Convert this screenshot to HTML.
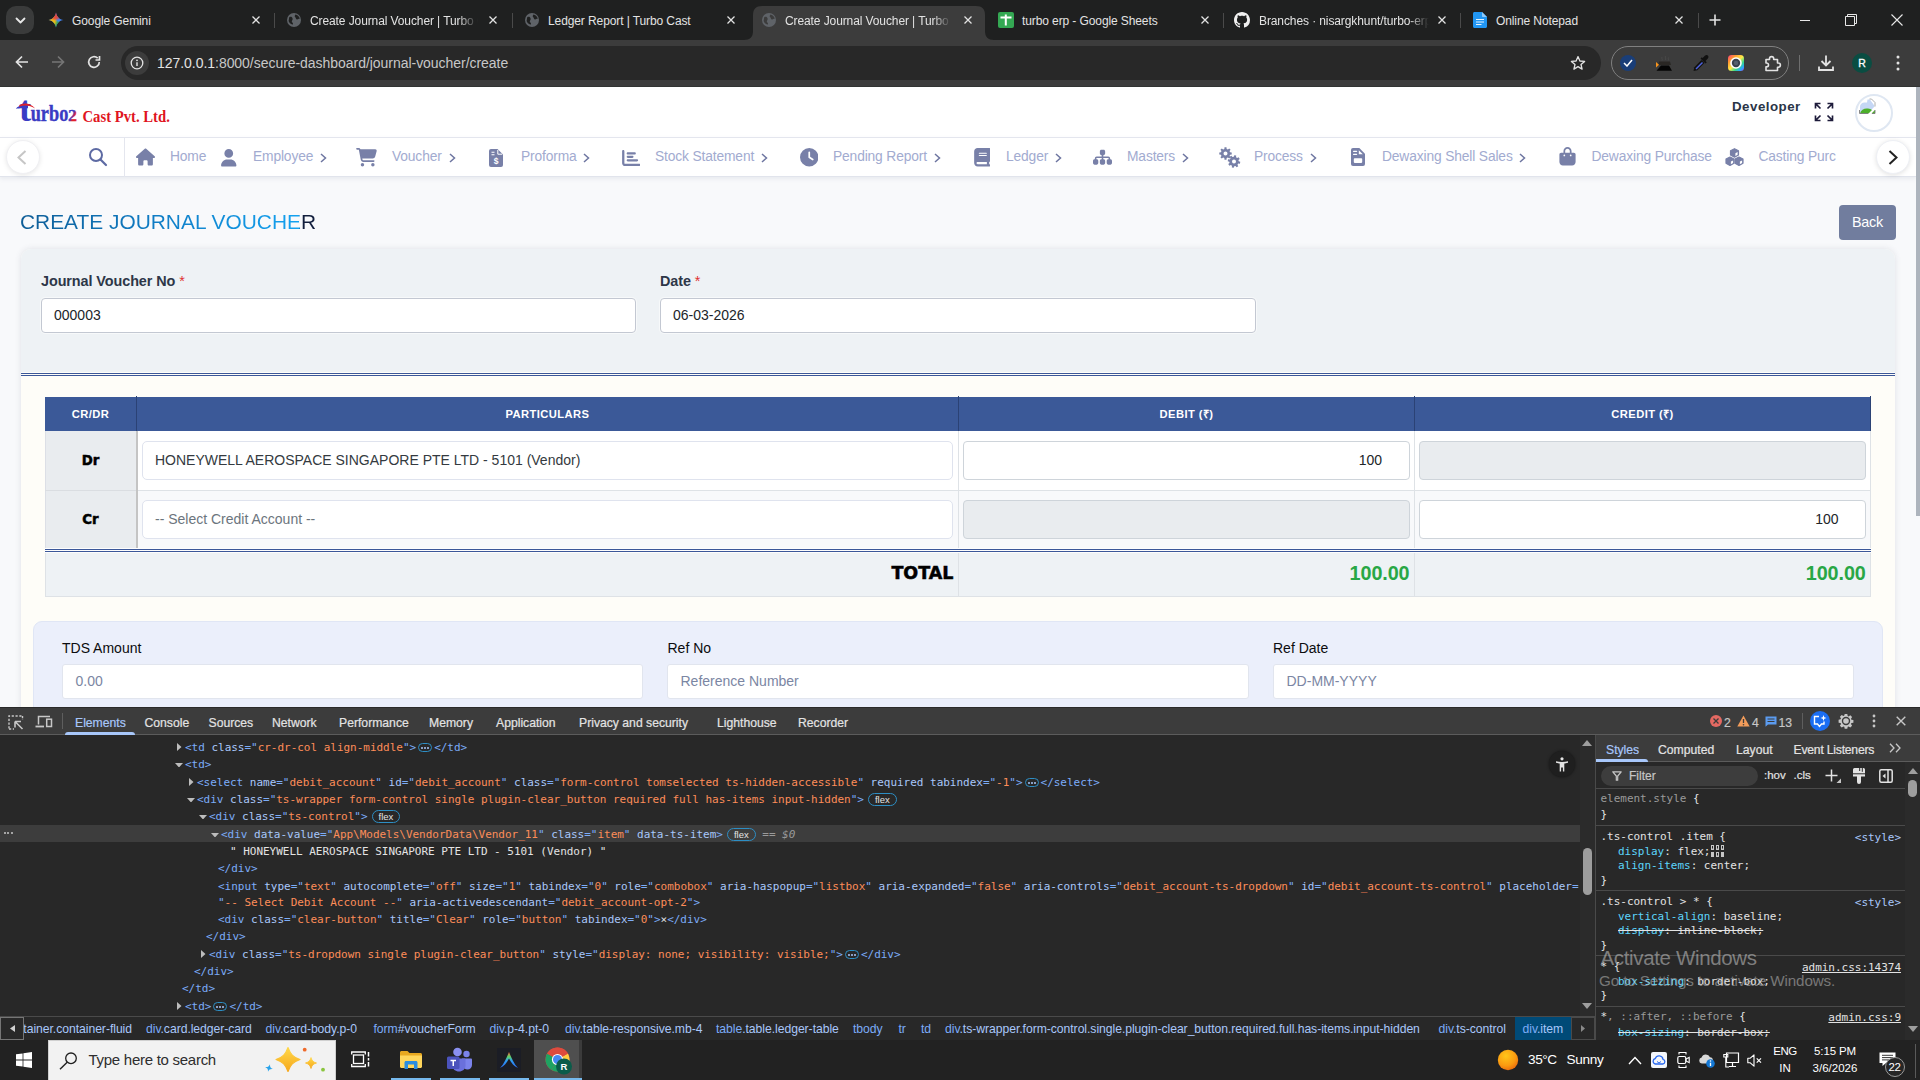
<!DOCTYPE html>
<html lang="en">
<head>
<meta charset="utf-8">
<title>Create Journal Voucher | Turbo Cast</title>
<style>
*{box-sizing:border-box;margin:0;padding:0}
html,body{width:1920px;height:1080px;overflow:hidden;background:#f4f6f9;font-family:"Liberation Sans",sans-serif;}
body{position:relative}
.abs{position:absolute}
.ui{font-family:"Liberation Sans",sans-serif;}
svg{display:block}
/* ===== Chrome ===== */
#tabstrip{position:absolute;left:0;top:0;width:1920px;height:40px;background:#1f2020}
#toolbar{position:absolute;left:0;top:40px;width:1920px;height:46px;background:#3c3c3c}
#topline{position:absolute;left:0;top:86px;width:1920px;height:1px;background:#323433}
.tab{position:absolute;top:7px;height:33px;color:#e3e3e3;font-size:12px;line-height:28px;white-space:nowrap}
.tab .t{position:absolute;top:0;left:0;letter-spacing:-0.1px}
.tabx{position:absolute}
.tsep{position:absolute;top:13px;width:1px;height:15px;background:#4a4a4a}
#omni{position:absolute;left:121px;top:46px;width:1480px;height:34px;border-radius:17px;background:#282828}
#url{position:absolute;left:157px;top:54px;font-size:14px;color:#e3e3e3;line-height:18px;letter-spacing:-0.04px}
/* ===== Page ===== */
#page{position:absolute;left:0;top:87px;width:1920px;height:620px;background:#f8f9fb;overflow:hidden}
#hdr{position:absolute;left:0;top:0;width:1916px;height:50px;background:#fff}
#nav{position:absolute;left:0;top:50px;width:1916px;height:40px;background:#fff;border-top:1px solid #e4e6ee;border-bottom:1px solid #e1e4ec;box-shadow:0 2px 4px rgba(120,130,160,.12)}
.nv{position:absolute;top:-.5px;height:37px;line-height:37px;font-size:13.800px;color:#a2abd0;letter-spacing:-.14px;white-space:nowrap}
.ni{position:absolute}

.lbl{font-size:14.400px;font-weight:bold;color:#2d3748;line-height:18px;letter-spacing:-.08px;white-space:nowrap}
.inp{height:35px;border:1px solid #c3c8d2;border-radius:4px;background:#fff;font-size:14px;line-height:33px;padding-left:12px;color:#212529;box-shadow:0 0 0 1px rgba(255,255,255,.5)}
.th{top:310px;height:34px;line-height:34px;text-align:center;color:#fff;font-weight:bold;font-size:11.200px;letter-spacing:.42px;white-space:nowrap}
.blk{font-family:"DejaVu Sans","Liberation Sans",sans-serif;font-weight:bold;color:#000;-webkit-text-stroke:.5px #000}
.sel{height:39px;border:1px solid #dfe3ee;border-radius:5px;background:#fff;font-size:14px;line-height:37px;padding-left:12px;white-space:nowrap}
.num{height:38.500px;border:1px solid #ced4da;border-radius:4px;background:#fff;font-size:14px;line-height:37px;padding-right:26.500px;text-align:right;color:#212529}
.num.dis{background:#e9ecef}
.tot{top:473px;text-align:right;font-size:19.800px;font-weight:bold;color:#28a745;line-height:26px;letter-spacing:-.1px}
.lb2{top:552px;font-size:14px;color:#0c0c0e;line-height:18px;white-space:nowrap}
.in2{top:577px;height:35px;border:1px solid #e1e5ee;border-radius:3px;background:#fff;font-size:14px;line-height:33px;padding-left:12.500px;color:#7b86a3;white-space:nowrap}
/* ===== DevTools ===== */
#dt{position:absolute;left:0;top:707px;width:1920px;height:333px;background:#282828}
.dtt{position:absolute;top:7.500px;font-size:12.200px;line-height:16px;color:#e3e3e3;white-space:nowrap;-webkit-text-stroke:.2px currentColor}
.ln{position:absolute;font-family:"DejaVu Sans Mono","Liberation Mono",monospace;font-size:11px;line-height:17px;white-space:pre;letter-spacing:-.02px;color:#e3e3e3}
.ln .t{color:#7cacf8}.ln .n{color:#a8c7fa}.ln .v{color:#fe8d59}.ln .w{color:#e3e3e3}
.tri{position:absolute}
.dots{display:inline-block;vertical-align:middle;position:relative;width:14px;height:9px;border:1px solid #2d8ec4;border-radius:5px;margin:0 2px 1px 2px}
.dots i{position:absolute;top:2.500px;width:2px;height:2px;border-radius:1px;background:#a8c7fa}
.dots i:nth-child(1){left:2px}.dots i:nth-child(2){left:5px}.dots i:nth-child(3){left:8px}
.flex{display:inline-block;vertical-align:middle;font-family:"Liberation Sans",sans-serif;font-size:9.500px;line-height:11px;height:13px;padding:0 6px;border:1px solid #2d8ec4;border-radius:7px;color:#e3e3e3;margin:0 0 1px 4px;letter-spacing:0}
.eq{color:#9a9a9a;font-style:italic}
.d3{position:absolute;top:0;width:2px;height:2px;border-radius:1px;background:#c7c7c7}
.sl{position:absolute;left:1600.500px;font-family:"DejaVu Sans Mono","Liberation Mono",monospace;font-size:11px;line-height:15px;white-space:pre;letter-spacing:-.02px;color:#e3e3e3}
.sl .g{color:#9a9a9a}.sl .p{color:#5cd5fb}
.sr{position:absolute;right:19px;font-family:"DejaVu Sans Mono","Liberation Mono",monospace;font-size:11px;line-height:15px;white-space:pre;letter-spacing:-.02px;color:#e3e3e3}
.sr .lk{color:#a8c7fa}.sr .ul{text-decoration:underline}
.sep{position:absolute;left:1596px;width:309px;height:1px;background:#4a4a4a}
.cr{position:absolute;top:314px;font-size:12.200px;line-height:16px;color:#a8c7fa;white-space:nowrap;letter-spacing:-.05px}
.cr b{font-weight:normal;color:#7cacf8}
/* ===== Taskbar ===== */
#tb{position:absolute;left:0;top:1040px;width:1920px;height:40px;background:#222}
.tbt{color:#fff;white-space:nowrap}
</style>
</head>
<body>
<!--CHROME-->
<div id="tabstrip">
  <!-- tab search -->
  <div class="abs" style="left:6px;top:6px;width:28px;height:28px;border-radius:10px;background:#3a3b3b"></div>
  <svg class="abs" style="left:14.500px;top:16.500px" width="11" height="8" viewBox="0 0 11 8"><path d="M1.5 1.5 L5.5 5.5 L9.5 1.5" fill="none" stroke="#e8e8e8" stroke-width="1.8" stroke-linecap="round" stroke-linejoin="round"/></svg>
  <!-- active tab shape -->
  <svg class="abs" style="left:744px;top:6px" width="250" height="34" viewBox="0 0 250 34"><path d="M0 34 C6 34 9 31 9 25 L9 9 C9 3 12 0 18 0 L232 0 C238 0 241 3 241 9 L241 25 C241 31 244 34 250 34 Z" fill="#3c3c3c"/></svg>
  <!-- tab 1 -->
  <svg class="abs" style="left:48px;top:12px" width="16" height="16" viewBox="0 0 16 16"><defs><radialGradient id="gmy" cx="0" cy=".55" r=".6"><stop offset="0" stop-color="#fbbc04"/><stop offset=".7" stop-color="#fbbc04" stop-opacity=".9"/><stop offset="1" stop-color="#fbbc04" stop-opacity="0"/></radialGradient><radialGradient id="gmr" cx=".45" cy="0" r=".55"><stop offset="0" stop-color="#ea4335"/><stop offset=".7" stop-color="#ea4335" stop-opacity=".9"/><stop offset="1" stop-color="#ea4335" stop-opacity="0"/></radialGradient><radialGradient id="gmg" cx=".5" cy="1" r=".5"><stop offset="0" stop-color="#34a853"/><stop offset=".7" stop-color="#34a853" stop-opacity=".9"/><stop offset="1" stop-color="#34a853" stop-opacity="0"/></radialGradient></defs><path id="gmp" d="M8 0.500 C8.600 4.600 11.400 7.400 15.500 8 C11.400 8.600 8.600 11.400 8 15.500 C7.400 11.400 4.600 8.600 0.500 8 C4.600 7.400 7.400 4.600 8 0.500Z" fill="#4285f4"/><path d="M8 0.500 C8.600 4.600 11.400 7.400 15.500 8 C11.400 8.600 8.600 11.400 8 15.500 C7.400 11.400 4.600 8.600 0.500 8 C4.600 7.400 7.400 4.600 8 0.500Z" fill="url(#gmg)"/><path d="M8 0.500 C8.600 4.600 11.400 7.400 15.500 8 C11.400 8.600 8.600 11.400 8 15.500 C7.400 11.400 4.600 8.600 0.500 8 C4.600 7.400 7.400 4.600 8 0.500Z" fill="url(#gmy)"/><path d="M8 0.500 C8.600 4.600 11.400 7.400 15.500 8 C11.400 8.600 8.600 11.400 8 15.500 C7.400 11.400 4.600 8.600 0.500 8 C4.600 7.400 7.400 4.600 8 0.500Z" fill="url(#gmr)"/></svg>
  <div class="tab" style="left:72px"><span class="t">Google Gemini</span></div>
  <svg class="tabx" style="left:252px;top:16px" width="8" height="8" viewBox="0 0 8 8"><path d="M.5 .5L7.500 7.500M7.500 .5L.5 7.500" stroke="#e3e3e3" stroke-width="1.250"/></svg>
  <div class="tsep" style="left:274px"></div>
  <!-- tab 2 -->
  <svg class="abs globe" style="left:286px;top:12px" width="16" height="16" viewBox="0 0 16 16"><circle cx="8" cy="8" r="7" fill="#5f6368"/><path d="M3.2 5.2 C5 4.2 6.2 5 6.6 6.4 C7 7.8 5.6 8.4 5.8 9.6 C6 10.8 7.4 11 7 12.6 C5 12.4 3.4 11 2.6 9 Z M9.4 2.4 C11.6 2.8 13.4 4.600 13.800 6.800 C12.400 6.600 12 7.800 10.800 7.400 C9.600 7 10.200 5.800 9.200 5.200 C8.400 4.600 8.800 3.200 9.400 2.400Z" fill="#1f2020"/></svg>
  <div class="tab" style="left:310px;width:170px;overflow:hidden;-webkit-mask-image:linear-gradient(90deg,#000 148px,transparent 168px)"><span class="t">Create Journal Voucher | Turbo Cast</span></div>
  <svg class="tabx" style="left:489px;top:16px" width="8" height="8" viewBox="0 0 8 8"><path d="M.5 .5L7.500 7.500M7.500 .5L.5 7.500" stroke="#e3e3e3" stroke-width="1.250"/></svg>
  <div class="tsep" style="left:512px"></div>
  <!-- tab 3 -->
  <svg class="abs globe" style="left:524px;top:12px" width="16" height="16" viewBox="0 0 16 16"><circle cx="8" cy="8" r="7" fill="#5f6368"/><path d="M3.2 5.2 C5 4.2 6.2 5 6.6 6.4 C7 7.8 5.6 8.4 5.8 9.6 C6 10.8 7.4 11 7 12.6 C5 12.4 3.4 11 2.6 9 Z M9.4 2.4 C11.6 2.8 13.4 4.600 13.800 6.800 C12.400 6.600 12 7.800 10.800 7.400 C9.600 7 10.200 5.800 9.200 5.200 C8.400 4.600 8.800 3.200 9.400 2.400Z" fill="#1f2020"/></svg>
  <div class="tab" style="left:548px"><span class="t">Ledger Report | Turbo Cast</span></div>
  <svg class="tabx" style="left:727px;top:16px" width="8" height="8" viewBox="0 0 8 8"><path d="M.5 .5L7.500 7.500M7.500 .5L.5 7.500" stroke="#e3e3e3" stroke-width="1.250"/></svg>
  <!-- tab 4 active -->
  <svg class="abs globe" style="left:761px;top:12px" width="16" height="16" viewBox="0 0 16 16"><circle cx="8" cy="8" r="7" fill="#5f6368"/><path d="M3.2 5.2 C5 4.2 6.2 5 6.6 6.4 C7 7.8 5.6 8.4 5.8 9.6 C6 10.8 7.4 11 7 12.6 C5 12.4 3.4 11 2.6 9 Z M9.4 2.4 C11.6 2.8 13.4 4.600 13.800 6.800 C12.400 6.600 12 7.800 10.800 7.400 C9.600 7 10.200 5.800 9.200 5.200 C8.400 4.600 8.800 3.200 9.400 2.400Z" fill="#3c3c3c"/></svg>
  <div class="tab" style="left:785px;width:170px;overflow:hidden;-webkit-mask-image:linear-gradient(90deg,#000 148px,transparent 166px)"><span class="t">Create Journal Voucher | Turbo Cast</span></div>
  <svg class="tabx" style="left:964px;top:16px" width="8" height="8" viewBox="0 0 8 8"><path d="M.5 .5L7.500 7.500M7.500 .5L.5 7.500" stroke="#e3e3e3" stroke-width="1.250"/></svg>
  <!-- tab 5 sheets -->
  <svg class="abs" style="left:998px;top:12px" width="16" height="16" viewBox="0 0 16 16"><rect x="0" y="0" width="16" height="16" rx="2" fill="#34a853"/><path d="M2.500 5.500 H13.500 M7.800 2.500 V13.500" stroke="#fff" stroke-width="2"/></svg>
  <div class="tab" style="left:1022px"><span class="t">turbo erp - Google Sheets</span></div>
  <svg class="tabx" style="left:1201px;top:16px" width="8" height="8" viewBox="0 0 8 8"><path d="M.5 .5L7.500 7.500M7.500 .5L.5 7.500" stroke="#e3e3e3" stroke-width="1.250"/></svg>
  <div class="tsep" style="left:1223px"></div>
  <!-- tab 6 github -->
  <svg class="abs" style="left:1234px;top:12px" width="16" height="16" viewBox="0 0 16 16"><path fill="#f0f0f0" d="M8 0C3.580 0 0 3.580 0 8c0 3.540 2.290 6.530 5.470 7.590.400.070.550-.170.550-.380 0-.190-.010-.820-.010-1.490-2.010.370-2.530-.490-2.690-.940-.090-.230-.480-.940-.820-1.130-.280-.150-.680-.520-.010-.530.630-.010 1.080.580 1.230.820.720 1.210 1.870.870 2.330.660.070-.520.280-.870.510-1.070-1.780-.200-3.640-.890-3.640-3.950 0-.870.310-1.590.820-2.150-.080-.200-.360-1.020.080-2.120 0 0 .670-.210 2.200.820.640-.180 1.320-.270 2-.270s1.360.090 2 .270c1.530-1.040 2.200-.820 2.200-.820.440 1.100.160 1.920.080 2.120.510.560.820 1.270.820 2.150 0 3.070-1.870 3.750-3.650 3.950.290.250.540.730.540 1.480 0 1.070-.010 1.930-.010 2.200 0 .210.150.460.550.380A8.013 8.013 0 0 0 16 8c0-4.420-3.580-8-8-8z"/></svg>
  <div class="tab" style="left:1259px;width:172px;overflow:hidden;-webkit-mask-image:linear-gradient(90deg,#000 150px,transparent 170px)"><span class="t">Branches · nisargkhunt/turbo-erp</span></div>
  <svg class="tabx" style="left:1438px;top:16px" width="8" height="8" viewBox="0 0 8 8"><path d="M.5 .5L7.500 7.500M7.500 .5L.5 7.500" stroke="#e3e3e3" stroke-width="1.250"/></svg>
  <div class="tsep" style="left:1460px"></div>
  <!-- tab 7 notepad -->
  <svg class="abs" style="left:1473px;top:12px" width="14" height="16" viewBox="0 0 14 16"><path d="M0 1.500 C0 .7 .7 0 1.500 0 H9 L14 5 V14.500 C14 15.300 13.300 16 12.500 16 H1.500 C.7 16 0 15.300 0 14.500Z" fill="#2196f3"/><path d="M9 0 L14 5 H10 C9.400 5 9 4.600 9 4Z" fill="#90caf9"/><path d="M3 7.500 H11 M3 10 H11 M3 12.500 H8.500" stroke="#e3f2fd" stroke-width="1.200"/></svg>
  <div class="tab" style="left:1496px"><span class="t">Online Notepad</span></div>
  <svg class="tabx" style="left:1675px;top:16px" width="8" height="8" viewBox="0 0 8 8"><path d="M.5 .5L7.500 7.500M7.500 .5L.5 7.500" stroke="#e3e3e3" stroke-width="1.250"/></svg>
  <div class="tsep" style="left:1698px"></div>
  <!-- new tab -->
  <svg class="abs" style="left:1709px;top:14px" width="12" height="12" viewBox="0 0 12 12"><path d="M6 0.500V11.500M0.500 6H11.500" stroke="#e3e3e3" stroke-width="1.600"/></svg>
  <!-- window controls -->
  <div class="abs" style="left:1800px;top:20px;width:10px;height:1px;background:#e8e8e8"></div>
  <svg class="abs" style="left:1845px;top:14px" width="12" height="12" viewBox="0 0 12 12"><path d="M0.500 2.500 H9.500 V11.500 H0.500Z M2.500 2.500 V0.500 H11.500 V9.500 H9.500" fill="none" stroke="#e8e8e8" stroke-width="1"/></svg>
  <svg class="abs" style="left:1891px;top:14px" width="12" height="12" viewBox="0 0 12 12"><path d="M0.500 0.500L11.500 11.500M11.500 0.500L0.500 11.500" stroke="#e8e8e8" stroke-width="1.100"/></svg>
</div>
<div id="toolbar">
  <!-- back -->
  <svg class="abs" style="left:15px;top:15px" width="14" height="14" viewBox="0 0 14 14"><path d="M13 7H2M7 1.500L1.500 7L7 12.500" fill="none" stroke="#e3e3e3" stroke-width="1.700"/></svg>
  <svg class="abs" style="left:51px;top:15px" width="14" height="14" viewBox="0 0 14 14"><path d="M1 7H12M7 1.500L12.500 7L7 12.500" fill="none" stroke="#757575" stroke-width="1.700"/></svg>
  <svg class="abs" style="left:87px;top:15px" width="14" height="14" viewBox="0 0 14 14"><path d="M12.300 7 A5.300 5.300 0 1 1 10.700 3.200" fill="none" stroke="#e3e3e3" stroke-width="1.700"/><path d="M12.500 1 V5 H8.500" fill="none" stroke="#e3e3e3" stroke-width="1.700"/></svg>
</div>
<div id="omni"></div>
<div class="abs" style="left:125px;top:51px;width:24px;height:24px;border-radius:12px;background:#3c3c3c"></div>
<svg class="abs" style="left:130px;top:56px" width="14" height="14" viewBox="0 0 14 14"><circle cx="7" cy="7" r="5.800" fill="none" stroke="#e3e3e3" stroke-width="1.300"/><path d="M7 6.300V10" stroke="#e3e3e3" stroke-width="1.400"/><circle cx="7" cy="4.300" r=".9" fill="#e3e3e3"/></svg>
<div id="url">127.0.0.1<span style="color:#c7c7c7">:8000/secure-dashboard/journal-voucher/create</span></div>
<!-- star -->
<svg class="abs" style="left:1570px;top:55px" width="16" height="16" viewBox="0 0 16 16"><path d="M8 1.600 L9.900 6 L14.600 6.400 L11 9.500 L12.100 14.100 L8 11.600 L3.900 14.100 L5 9.500 L1.400 6.400 L6.100 6Z" fill="none" stroke="#e3e3e3" stroke-width="1.300" stroke-linejoin="round"/></svg>
<!-- extensions pill -->
<div class="abs" style="left:1611px;top:46px;width:178px;height:34px;border-radius:17px;border:1px solid #808080"></div>
<div class="abs" style="left:1620px;top:55px;width:16px;height:16px;border-radius:8px;background:#1a3e78"></div>
<svg class="abs" style="left:1623px;top:59px" width="10" height="8" viewBox="0 0 10 8"><path d="M1 4L4 7L9 1" fill="none" stroke="#fff" stroke-width="1.500"/></svg>
<svg class="abs" style="left:1655px;top:54px" width="18" height="18" viewBox="0 0 18 18"><path d="M7 3C6 4.500 8 5 7 6.500M10.500 2C9.500 3.500 11.500 4.500 10.500 6M13.500 3.500C12.800 4.500 14 5.500 13.300 6.500" fill="none" stroke="#4a4a4a" stroke-width=".9"/><path d="M4 7.500H15L16 11H3Z" fill="#2a2724"/><path d="M1.500 16.800L6 11.500H14L17 16.800Z" fill="#050505"/><path d="M1 8V13.500L4 10.700Z" fill="#f7941d"/></svg>
<svg class="abs" style="left:1692px;top:54px" width="18" height="18" viewBox="0 0 18 18"><path d="M1.500 17L2.300 13.200L9.500 6L12.500 9L5.300 16.200Z" fill="#111"/><path d="M3.500 14.500L10 8L11 9L4.500 15.500Z" fill="#4f63e0"/><path d="M8.500 4.500L13.500 9.500L14.800 8.200L13.500 6.900L15.800 4.600C16.700 3.700 16.700 2.400 15.900 1.600C15.100 .8 13.800 .8 12.900 1.700L10.600 4L9.800 3.200Z" fill="#111"/></svg>
<svg class="abs" style="left:1728px;top:55px" width="16" height="16" viewBox="0 0 16 16"><defs><linearGradient id="rb" x1="0" y1="0" x2="1" y2="1"><stop offset="0" stop-color="#ff3b7f"/><stop offset=".25" stop-color="#ff9a2e"/><stop offset=".5" stop-color="#ffe94a"/><stop offset=".7" stop-color="#36d88a"/><stop offset=".85" stop-color="#2aa8ff"/><stop offset="1" stop-color="#a44cf6"/></linearGradient></defs><rect x="0" y="0" width="16" height="16" rx="3.500" fill="url(#rb)"/><circle cx="8" cy="8" r="5.800" fill="#fff"/><circle cx="8" cy="8" r="4.200" fill="#39424e"/><circle cx="8" cy="8" r="2.200" fill="#55606e"/></svg>
<svg class="abs" style="left:1763px;top:53px" width="20" height="20" viewBox="0 0 20 20"><path d="M3 6.500H6.500V5.700A2.100 2.100 0 0 1 10.700 5.700V6.500H14.500V10H15.300A2.100 2.100 0 0 1 15.300 14.200H14.500V17.500H3V13.800H3.600A1.900 1.900 0 0 0 3.600 10H3Z" fill="none" stroke="#e3e3e3" stroke-width="1.600" stroke-linejoin="round"/></svg>
<div class="abs" style="left:1798.500px;top:55px;width:1px;height:16px;background:#6e6e6e"></div>
<!-- download -->
<svg class="abs" style="left:1817px;top:54px" width="18" height="18" viewBox="0 0 18 18"><path d="M9 1.500V11M4.500 7L9 11.500L13.500 7M2 12.500V16H16V12.500" fill="none" stroke="#e3e3e3" stroke-width="1.800"/></svg>
<div class="abs" style="left:1852px;top:53px;width:20px;height:20px;border-radius:10px;background:#0a4d42;color:#fff;font-size:10.500px;text-align:center;line-height:20px;-webkit-text-stroke:.3px #fff">R</div>
<svg class="abs" style="left:1896px;top:55px" width="4" height="16" viewBox="0 0 4 16"><circle cx="2" cy="2" r="1.500" fill="#e3e3e3"/><circle cx="2" cy="8" r="1.500" fill="#e3e3e3"/><circle cx="2" cy="14" r="1.500" fill="#e3e3e3"/></svg>
<div id="topline"></div>
<!--PAGE-->
<div id="page">
<div id="hdr">
  <!-- logo -->
  <svg class="abs" style="left:0;top:0" width="190" height="50" viewBox="0 0 190 50">
    <defs><linearGradient id="lg2" x1="0" y1="0" x2="1" y2="1"><stop offset="0" stop-color="#3a3cc4"/><stop offset=".45" stop-color="#3a3cc4"/><stop offset=".6" stop-color="#e0202a"/><stop offset="1" stop-color="#e0202a"/></linearGradient></defs>
    <text x="19" y="34.300" font-family="Liberation Serif,serif" font-weight="bold" font-size="36.500" fill="#3a3cc4">t</text>
    <path d="M15.800 21.800 C17.500 19.500 20 18.300 23 18.300 L28 18.300 L28 21.300 L23 21.300 C20 21.300 17.500 21.500 15.800 21.800Z" fill="#3a3cc4"/>
    <path d="M19 18.800 C23 15.300 30 15.300 35.200 21.500 C30 18.200 24 17.800 19 19.800Z" fill="#e0202a"/>
    <g transform="translate(30.700,34.300) scale(.85,1.030)"><text x="0" y="0" font-family="Liberation Serif,serif" font-weight="bold" font-size="21.500" fill="#3a3cc4" stroke="#3a3cc4" stroke-width=".35">urbo</text></g>
    <g transform="translate(68,34.300) scale(1.120,1)"><text x="0" y="0" font-family="Liberation Serif,serif" font-weight="bold" font-size="16" fill="url(#lg2)" stroke="url(#lg2)" stroke-width=".3">2</text></g>
    <g transform="translate(82.500,35.200) scale(.875,1.020)"><text x="0" y="0" font-family="Liberation Serif,serif" font-weight="bold" font-size="16.800" fill="#e0141e">Cast Pvt. Ltd.</text></g>
  </svg>
  <div class="abs" id="dev" style="left:1732px;top:11.500px;font-size:13.300px;font-weight:bold;color:#2a3547;letter-spacing:.5px;line-height:16px">Developer</div>
  <svg class="abs" style="left:1814px;top:15px" width="20" height="20" viewBox="0 0 20 20"><g fill="none" stroke="#1d1b3a" stroke-width="1.650"><path d="M1.500 6.500V1.500H6.500M1.800 1.800L6.500 6.500"/><path d="M13.500 1.500H18.500V6.500M18.200 1.800L13.500 6.500"/><path d="M1.500 13.500V18.500H6.500M1.800 18.200L6.500 13.500"/><path d="M13.500 18.500H18.500V13.500M18.200 18.200L13.500 13.500"/></g></svg>
  <div class="abs" style="left:1855px;top:7px;width:38px;height:38px;border-radius:19px;border:2px solid #dfe7f2;background:#fff"></div>
  <svg class="abs" style="left:1859px;top:11px" width="17" height="17" viewBox="0 0 17 17"><path d="M1 15.500 V9 C1 6 3 4.500 5.500 4.500 L8 4.500 L8.500 1.500 L12.500 1.500 L15.500 4.500 V8.500 L9 15.500Z" fill="#c5d7f5"/><path d="M10.500 1 H12.500 L16 4.500 V8.500" fill="#fff" stroke="#9a9a9a" stroke-width=".8"/><path d="M1 15.500 C2 11.500 5.500 10 9 10.500 C10.500 10.700 12 11.300 13 12 L9.500 15.500Z" fill="#4caf2a"/><path d="M12.500 15.500 L16 12 V15.500Z" fill="#4caf2a"/><path d="M.5 12 V15.500 H9 M13 15.500 H16 V12" fill="none" stroke="#7a7a7a" stroke-width=".9"/></svg>
</div>
<div id="nav">
  <div class="abs" style="left:124px;top:0;width:1px;height:39px;background:#e4e6ee"></div>
  <!-- left scroll btn -->
  <div class="abs" style="left:6px;top:2px;width:34px;height:34px;border-radius:17px;background:#fff;border:1px solid #f0f0f3;box-shadow:0 1px 5px rgba(0,0,0,.10)"></div>
  <svg class="abs" style="left:17px;top:12px" width="10" height="15" viewBox="0 0 10 15"><path d="M8.500 1L1.500 7.500L8.500 14" fill="none" stroke="#c6c6c6" stroke-width="2"/></svg>
  <!-- search -->
  <svg class="abs" style="left:87.500px;top:9px" width="20" height="20" viewBox="0 0 20 20"><circle cx="8" cy="8" r="6" fill="none" stroke="#5d6aa3" stroke-width="2"/><path d="M12.500 12.500L18 18" stroke="#5d6aa3" stroke-width="2.200" stroke-linecap="round"/></svg>
  <!-- home -->
  <svg class="abs ni" style="left:136px;top:10px" width="19" height="18" viewBox="0 0 576 512"><path fill="#7880a8" d="M575.800 255.500c0 18-15 32.100-32 32.100h-32l.7 160.200c0 2.700-.2 5.400-.5 8.100V472c0 22.100-17.900 40-40 40H456c-1.100 0-2.200 0-3.300-.1c-1.400 .1-2.800 .1-4.200 .1H416 392c-22.100 0-40-17.900-40-40V448 384c0-17.700-14.300-32-32-32H256c-17.700 0-32 14.300-32 32v64 24c0 22.100-17.900 40-40 40H160 128.100c-1.500 0-3-.1-4.500-.2c-1.200 .1-2.400 .2-3.600 .2H104c-22.100 0-40-17.900-40-40V360c0-.9 0-1.900 .1-2.800V287.600H32c-18 0-32-14-32-32.100c0-9 3-17 10-24L266.400 8c7-7 15-8 22-8s15 2 21 7L564.800 231.500c8 7 12 15 11 24z"/></svg>
  <div class="nv" style="left:170px">Home</div>
  <!-- user -->
  <svg class="abs ni" style="left:221px;top:11px" width="15.500" height="17.500" viewBox="0 0 448 512"><path fill="#7880a8" d="M224 256A128 128 0 1 0 224 0a128 128 0 1 0 0 256zm-45.700 48C79.800 304 0 383.800 0 482.300C0 498.700 13.300 512 29.700 512H418.300c16.400 0 29.700-13.300 29.700-29.700C448 383.800 368.200 304 269.700 304H178.300z"/></svg>
  <div class="nv" style="left:253px">Employee</div>
  <svg class="abs chev" style="left:320px;top:15px" width="7" height="10" viewBox="0 0 7 10"><path d="M1 1L5.500 5L1 9" fill="none" stroke="#6d75a0" stroke-width="1.500"/></svg>
  <!-- cart -->
  <svg class="abs ni" style="left:356px;top:10px" width="21" height="18.500" viewBox="0 0 576 512"><path fill="#7880a8" d="M0 24C0 10.700 10.700 0 24 0H69.500c22 0 41.500 12.800 50.600 32h411c26.300 0 45.500 25 38.600 50.400l-41 152.300c-8.500 31.400-37 53.300-69.500 53.300H170.700l5.400 28.500c2.200 11.300 12.100 19.500 23.600 19.500H488c13.300 0 24 10.700 24 24s-10.700 24-24 24H199.700c-34.600 0-64.300-24.600-70.700-58.500L77.400 54.500c-.7-3.800-4-6.500-7.900-6.500H24C10.700 48 0 37.300 0 24zM128 464a48 48 0 1 1 96 0 48 48 0 1 1 -96 0zm336-48a48 48 0 1 1 0 96 48 48 0 1 1 0-96z"/></svg>
  <div class="nv" style="left:392px">Voucher</div>
  <svg class="abs chev" style="left:449px;top:15px" width="7" height="10" viewBox="0 0 7 10"><path d="M1 1L5.500 5L1 9" fill="none" stroke="#6d75a0" stroke-width="1.500"/></svg>
  <!-- proforma -->
  <svg class="abs ni" style="left:489px;top:11px" width="14" height="18" viewBox="0 0 14 18"><path fill="#7880a8" d="M2 0 H8.500 L14 5.500 V16 A2 2 0 0 1 12 18 H2 A2 2 0 0 1 0 16 V2 A2 2 0 0 1 2 0Z"/><path d="M8.800 1 V5.200 H13" stroke="#fff" stroke-width="1" fill="none"/><path d="M2.500 3.300 H5.500 M2.500 5.800 H5.500" stroke="#fff" stroke-width="1.100"/><text x="7" y="15.200" font-family="Liberation Sans,sans-serif" font-weight="bold" font-size="8.500" fill="#fff" text-anchor="middle">$</text></svg>
  <div class="nv" style="left:521px">Proforma</div>
  <svg class="abs chev" style="left:583px;top:15px" width="7" height="10" viewBox="0 0 7 10"><path d="M1 1L5.500 5L1 9" fill="none" stroke="#6d75a0" stroke-width="1.500"/></svg>
  <!-- stock -->
  <svg class="abs ni" style="left:621.500px;top:12px" width="18.500" height="16" viewBox="0 32 512 448"><path fill="#7880a8" d="M32 32c17.700 0 32 14.300 32 32V400c0 8.800 7.200 16 16 16H480c17.700 0 32 14.300 32 32s-14.300 32-32 32H80c-44.200 0-80-35.800-80-80V64C0 46.300 14.300 32 32 32zm96 96c0-17.700 14.300-32 32-32l192 0c17.700 0 32 14.300 32 32s-14.300 32-32 32l-192 0c-17.700 0-32-14.300-32-32zm32 64H288c17.700 0 32 14.300 32 32s-14.300 32-32 32H160c-17.700 0-32-14.300-32-32s14.300-32 32-32zm0 96H416c17.700 0 32 14.300 32 32s-14.300 32-32 32H160c-17.700 0-32-14.300-32-32s14.300-32 32-32z"/></svg>
  <div class="nv" style="left:655px">Stock Statement</div>
  <svg class="abs chev" style="left:761px;top:15px" width="7" height="10" viewBox="0 0 7 10"><path d="M1 1L5.500 5L1 9" fill="none" stroke="#6d75a0" stroke-width="1.500"/></svg>
  <!-- clock -->
  <svg class="abs ni" style="left:799.500px;top:10px" width="18.500" height="18.500" viewBox="0 0 512 512"><path fill="#7880a8" d="M256 0a256 256 0 1 1 0 512A256 256 0 1 1 256 0zM232 120V256c0 8 4 15.500 10.700 20l96 64c11 7.400 25.900 4.400 33.300-6.700s4.400-25.900-6.700-33.300L280 243.200V120c0-13.300-10.700-24-24-24s-24 10.700-24 24z"/></svg>
  <div class="nv" style="left:833px">Pending Report</div>
  <svg class="abs chev" style="left:934px;top:15px" width="7" height="10" viewBox="0 0 7 10"><path d="M1 1L5.500 5L1 9" fill="none" stroke="#6d75a0" stroke-width="1.500"/></svg>
  <!-- ledger book -->
  <svg class="abs ni" style="left:973.500px;top:10px" width="16.500" height="18.500" viewBox="0 0 448 512"><path fill="#7880a8" d="M96 0C43 0 0 43 0 96V416c0 53 43 96 96 96H384h32c17.700 0 32-14.300 32-32s-14.300-32-32-32V384c17.700 0 32-14.300 32-32V32c0-17.700-14.300-32-32-32H384 96zm0 384H352v64H96c-17.700 0-32-14.300-32-32s14.300-32 32-32zm32-240c0-8.800 7.200-16 16-16H336c8.800 0 16 7.200 16 16s-7.200 16-16 16H144c-8.800 0-16-7.200-16-16zm16 48H336c8.800 0 16 7.200 16 16s-7.200 16-16 16H144c-8.800 0-16-7.200-16-16s7.200-16 16-16z"/></svg>
  <div class="nv" style="left:1006px">Ledger</div>
  <svg class="abs chev" style="left:1055px;top:15px" width="7" height="10" viewBox="0 0 7 10"><path d="M1 1L5.500 5L1 9" fill="none" stroke="#6d75a0" stroke-width="1.500"/></svg>
  <!-- sitemap -->
  <svg class="abs ni" style="left:1093px;top:11px" width="19" height="16.500" viewBox="0 32 576 448"><path fill="#7880a8" d="M208 80c0-26.500 21.500-48 48-48h64c26.500 0 48 21.500 48 48v64c0 26.500-21.500 48-48 48h-8v40H464c30.900 0 56 25.100 56 56v32h8c26.500 0 48 21.500 48 48v64c0 26.500-21.500 48-48 48H464c-26.500 0-48-21.500-48-48V368c0-26.500 21.500-48 48-48h8V288c0-4.400-3.600-8-8-8H312v40h8c26.500 0 48 21.500 48 48v64c0 26.500-21.500 48-48 48H256c-26.500 0-48-21.500-48-48V368c0-26.500 21.500-48 48-48h8V280H112c-4.400 0-8 3.600-8 8v32h8c26.500 0 48 21.500 48 48v64c0 26.500-21.500 48-48 48H48c-26.500 0-48-21.500-48-48V368c0-26.500 21.500-48 48-48h8V288c0-30.900 25.100-56 56-56H264V192h-8c-26.500 0-48-21.500-48-48V80z"/></svg>
  <div class="nv" style="left:1127px">Masters</div>
  <svg class="abs chev" style="left:1182px;top:15px" width="7" height="10" viewBox="0 0 7 10"><path d="M1 1L5.500 5L1 9" fill="none" stroke="#6d75a0" stroke-width="1.500"/></svg>
  <!-- gears -->
  <svg class="abs ni" style="left:1219px;top:8.500px" width="22" height="22" viewBox="0 0 22 22"><path fill="#7880a8" fill-rule="evenodd" d="M12.720 5.510 L12.720 7.490 L11.050 7.670 L10.550 8.890 L11.600 10.200 L10.200 11.600 L8.890 10.550 L7.670 11.050 L7.490 12.720 L5.510 12.720 L5.330 11.050 L4.110 10.550 L2.800 11.600 L1.400 10.200 L2.450 8.890 L1.950 7.670 L0.280 7.490 L0.280 5.510 L1.950 5.330 L2.450 4.110 L1.400 2.800 L2.800 1.400 L4.110 2.450 L5.330 1.950 L5.510 0.280 L7.490 0.280 L7.670 1.950 L8.890 2.450 L10.200 1.400 L11.600 2.800 L10.550 4.110 L11.050 5.330Z M8.500 6.500 A2 2 0 1 0 4.500 6.500 A2 2 0 1 0 8.500 6.500 Z"/><path fill="#7880a8" fill-rule="evenodd" d="M21.290 14.770 L20.900 16.700 L19.230 16.550 L18.490 17.650 L19.260 19.140 L17.620 20.230 L16.540 18.940 L15.240 19.190 L14.730 20.790 L12.800 20.400 L12.950 18.730 L11.850 17.990 L10.360 18.760 L9.270 17.120 L10.560 16.040 L10.310 14.740 L8.710 14.230 L9.100 12.300 L10.770 12.450 L11.510 11.350 L10.740 9.860 L12.380 8.770 L13.460 10.060 L14.760 9.810 L15.270 8.210 L17.200 8.600 L17.050 10.270 L18.150 11.010 L19.640 10.240 L20.730 11.880 L19.440 12.960 L19.690 14.260Z M17 14.500 A2 2 0 1 0 13 14.500 A2 2 0 1 0 17 14.500 Z"/></svg>
  <div class="nv" style="left:1254px">Process</div>
  <svg class="abs chev" style="left:1310px;top:15px" width="7" height="10" viewBox="0 0 7 10"><path d="M1 1L5.500 5L1 9" fill="none" stroke="#6d75a0" stroke-width="1.500"/></svg>
  <!-- file -->
  <svg class="abs ni" style="left:1351px;top:10px" width="14" height="18" viewBox="0 0 14 18"><path fill="#7880a8" d="M2 0H8.300L14 5.700V16A2 2 0 0 1 12 18H2A2 2 0 0 1 0 16V2A2 2 0 0 1 2 0Z"/><path d="M7.800 2.300V6.200H11.800Z" fill="#fff"/><path d="M2.600 3.300H5.600M2.600 6.300H5.600" stroke="#fff" stroke-width="1.300" stroke-linecap="round"/><rect x="2.800" y="10.300" width="8.400" height="4.600" rx=".8" fill="#fff"/></svg>
  <div class="nv" style="left:1382px">Dewaxing Shell Sales</div>
  <svg class="abs chev" style="left:1519px;top:15px" width="7" height="10" viewBox="0 0 7 10"><path d="M1 1L5.500 5L1 9" fill="none" stroke="#6d75a0" stroke-width="1.500"/></svg>
  <!-- bag -->
  <svg class="abs ni" style="left:1559px;top:9px" width="17" height="18.500" viewBox="0 0 448 512"><path fill="#7880a8" d="M160 112c0-35.300 28.700-64 64-64s64 28.700 64 64v48H160V112zm-48 48H48c-26.500 0-48 21.500-48 48V416c0 53 43 96 96 96H352c53 0 96-43 96-96V208c0-26.500-21.500-48-48-48H336V112C336 50.100 285.900 0 224 0S112 50.100 112 112v48zm24 48a24 24 0 1 1 0 48 24 24 0 1 1 0-48zm152 24a24 24 0 1 1 48 0 24 24 0 1 1 -48 0z"/></svg>
  <div class="nv" style="left:1591.500px">Dewaxing Purchase</div>
  <!-- cubes -->
  <svg class="abs ni" style="left:1724.500px;top:10px" width="19" height="18.500" viewBox="0 0 19 18.500"><path d="M9.5 0.7L13.5 2.8V7L9.5 9.1L5.5 7V2.8Z" fill="#7880a8" stroke="#7880a8" stroke-width="1.200" stroke-linejoin="round"/><path d="M10.4 5.3L12.6 4.1V6.7L10.4 7.9Z" fill="#fff"/><path d="M5 9L9 11.1V15.3L5 17.4L1 15.3V11.1Z" fill="#7880a8" stroke="#7880a8" stroke-width="1.200" stroke-linejoin="round"/><path d="M5.9 13.6L8.1 12.4V15L5.9 16.2Z" fill="#fff"/><path d="M14 9L18 11.1V15.3L14 17.4L10 15.3V11.1Z" fill="#7880a8" stroke="#7880a8" stroke-width="1.200" stroke-linejoin="round"/><path d="M14.9 13.6L17.1 12.4V15L14.9 16.2Z" fill="#fff"/></svg>
  <div class="nv" style="left:1758.500px">Casting Purc</div>
  <!-- right btn -->
  <div class="abs" style="left:1876px;top:2px;width:34px;height:34px;border-radius:17px;background:#fff;border:1px solid #eef0f5;box-shadow:0 1px 5px rgba(0,0,0,.12)"></div>
  <svg class="abs" style="left:1888px;top:12px" width="10" height="15" viewBox="0 0 10 15"><path d="M1.500 1L8.500 7.500L1.500 14" fill="none" stroke="#222" stroke-width="2"/></svg>
</div>
<!-- scrollbar -->
<div class="abs" style="left:1916px;top:0;width:4px;height:429px;background:#adb4bd"></div>
<!--PAGEBODY-->
<div class="abs" id="ttl" style="left:20px;top:122px;font-size:20.900px;line-height:26px;white-space:nowrap;background:linear-gradient(90deg,#0f5d96 0%,#0f7cc4 45%,#14a2f0 94.300%,#131f3d 94.800%);-webkit-background-clip:text;background-clip:text;color:transparent;letter-spacing:0">CREATE JOURNAL VOUCHER</div>
<div class="abs" style="left:1839px;top:118px;width:57px;height:35px;border-radius:4px;background:#717d9e;color:#fff;font-size:14.400px;line-height:34px;text-align:center;letter-spacing:-.2px">Back</div>
<!-- card -->
<div class="abs" style="left:21px;top:162px;width:1874px;height:560px;border-radius:10px 10px 0 0;background:#fefdf8;box-shadow:0 0 6px rgba(60,70,90,.13)"></div>
<div class="abs" style="left:21px;top:162px;width:1874px;height:123px;border-radius:10px 10px 0 0;background:#eef2f5"></div>
<div class="abs" style="left:21px;top:286px;width:1874px;height:1px;background:#3b5799"></div>
<div class="abs" style="left:21px;top:288px;width:1874px;height:1px;background:#3b5799"></div>
<div class="abs lbl" style="left:41px;top:185px">Journal Voucher No <span style="color:#e03131;font-weight:normal">*</span></div>
<div class="abs inp" style="left:41px;top:211px;width:595px">000003</div>
<div class="abs lbl" style="left:660px;top:185px">Date <span style="color:#e03131;font-weight:normal">*</span></div>
<div class="abs inp" style="left:660px;top:211px;width:596px">06-03-2026</div>
<!-- table -->
<div class="abs" style="left:45px;top:310px;width:1826px;height:34px;background:#3b5998"></div>
<div class="abs" style="left:136px;top:309px;width:1px;height:36px;background:#2b4275"></div>
<div class="abs" style="left:958px;top:309px;width:1px;height:36px;background:#2b4275"></div>
<div class="abs" style="left:1414px;top:309px;width:1px;height:36px;background:#2b4275"></div>
<div class="abs" style="left:1870px;top:309px;width:1px;height:36px;background:#2b4275"></div>
<div class="abs th" style="left:45px;width:91px">CR/DR</div>
<div class="abs th" style="left:137px;width:821px">PARTICULARS</div>
<div class="abs th" style="left:959px;width:455px">DEBIT (₹)</div>
<div class="abs th" style="left:1415px;width:455px">CREDIT (₹)</div>
<!-- rows -->
<div class="abs" style="left:45px;top:344px;width:1826px;height:59px;background:#fff"></div>
<div class="abs" style="left:45px;top:403px;width:1826px;height:58px;background:#f8f9fb;border-top:1px solid #dee2e6"></div>
<div class="abs" style="left:45px;top:344px;width:93px;height:117px;background:#e9ecef;border-left:1px solid #dcdfe6;border-right:2px solid #c4c4c4"></div>
<div class="abs" style="left:45px;top:403px;width:91px;height:1px;background:#dadde1"></div>
<div class="abs" style="left:958px;top:344px;width:1px;height:166px;background:#dee2e6"></div>
<div class="abs" style="left:1414px;top:344px;width:1px;height:166px;background:#dee2e6"></div>
<div class="abs" style="left:1870px;top:344px;width:1px;height:166px;background:#dee2e6"></div>
<div class="abs blk" style="left:45px;top:364px;width:91px;text-align:center;font-size:13.300px;line-height:20px">Dr</div>
<div class="abs blk" style="left:45px;top:423px;width:91px;text-align:center;font-size:13.300px;line-height:20px">Cr</div>
<div class="abs sel" style="left:142px;top:354px;width:811px;color:#343a40">HONEYWELL AEROSPACE SINGAPORE PTE LTD - 5101 (Vendor)</div>
<div class="abs sel" style="left:142px;top:413px;width:811px;color:#6c757d">-- Select Credit Account --</div>
<div class="abs num" style="left:963px;top:354px;width:446.500px">100</div>
<div class="abs num dis" style="left:1419px;top:354px;width:447px"></div>
<div class="abs num dis" style="left:963px;top:413px;width:446.500px"></div>
<div class="abs num" style="left:1419px;top:413px;width:447px">100</div>
<!-- total -->
<div class="abs" style="left:45px;top:461px;width:1826px;height:5px;background:#fdfdfd"></div>
<div class="abs" style="left:45px;top:462px;width:1826px;height:1px;background:#3b5799"></div>
<div class="abs" style="left:45px;top:464px;width:1826px;height:1px;background:#3b5799"></div>
<div class="abs" style="left:45px;top:466px;width:1826px;height:44px;background:#eef2f5;border-bottom:1px solid #dee2e6;border-left:1px solid #dee2e6"></div>
<div class="abs" style="left:958px;top:466px;width:1px;height:44px;background:#dee2e6"></div>
<div class="abs" style="left:1414px;top:466px;width:1px;height:44px;background:#dee2e6"></div>
<div class="abs" style="left:1870px;top:466px;width:1px;height:44px;background:#dee2e6"></div>
<div class="abs blk" style="left:800px;top:473px;width:153.500px;text-align:right;font-size:17.500px;line-height:26px">TOTAL</div>
<div class="abs tot" style="left:1200px;width:209.500px">100.00</div>
<div class="abs tot" style="left:1600px;width:265.700px">100.00</div>
<!-- lower box -->
<div class="abs" style="left:33px;top:534px;width:1850px;height:120px;border-radius:9px;background:#ebeffb;border:1px solid #e0e6f5"></div>
<div class="abs lb2" style="left:62px">TDS Amount</div>
<div class="abs lb2" style="left:667.500px">Ref No</div>
<div class="abs lb2" style="left:1273px">Ref Date</div>
<div class="abs in2" style="left:62px;width:581px">0.00</div>
<div class="abs in2" style="left:667px;width:582px">Reference Number</div>
<div class="abs in2" style="left:1273px;width:581px">DD-MM-YYYY</div>
<!--/PAGEBODY-->
</div>
<!--DEVTOOLS-->
<div id="dt">
  <!-- top toolbar -->
  <div class="abs" style="left:0;top:0;width:1920px;height:28px;background:#3c3c3c;border-bottom:1px solid #5c5c5c;border-top:1px solid #2a2a2a"></div>
  <svg class="abs" style="left:8px;top:8px" width="16" height="15" viewBox="0 0 16 15"><path d="M1 13.500V1H14" fill="none" stroke="#c7c7c7" stroke-width="1.400" stroke-dasharray="2.200 1.600"/><path d="M1 14H6M14.500 1V5" fill="none" stroke="#c7c7c7" stroke-width="1.400" stroke-dasharray="2.200 1.600"/><path d="M7 6.500H13M7 6.500V12.500M7.500 7L14.500 14" fill="none" stroke="#c7c7c7" stroke-width="1.600"/></svg>
  <svg class="abs" style="left:35px;top:8px" width="18" height="13" viewBox="0 0 18 13"><path d="M3.500 9.500V1.500H15" fill="none" stroke="#c7c7c7" stroke-width="1.500"/><path d="M0.500 11.500H9" stroke="#c7c7c7" stroke-width="1.800"/><rect x="11.700" y="4.200" width="4.800" height="7.300" fill="none" stroke="#c7c7c7" stroke-width="1.500"/></svg>
  <div class="abs" style="left:62px;top:6px;width:1px;height:16px;background:#5e5e5e"></div>
  <div class="dtt" style="left:75px;color:#a8c7fa">Elements</div>
  <div class="abs" style="left:65px;top:25px;width:70px;height:3px;border-radius:3px 3px 0 0;background:#a8c7fa"></div>
  <div class="dtt" style="left:144.500px">Console</div>
  <div class="dtt" style="left:208.500px">Sources</div>
  <div class="dtt" style="left:272px">Network</div>
  <div class="dtt" style="left:339px">Performance</div>
  <div class="dtt" style="left:429px">Memory</div>
  <div class="dtt" style="left:496px">Application</div>
  <div class="dtt" style="left:579px">Privacy and security</div>
  <div class="dtt" style="left:717px">Lighthouse</div>
  <div class="dtt" style="left:798px">Recorder</div>
  <!-- right status -->
  <div class="abs" style="left:1709.500px;top:8px;width:12px;height:12px;border-radius:6px;background:#e46962"></div>
  <svg class="abs" style="left:1712.500px;top:11px" width="6" height="6" viewBox="0 0 6 6"><path d="M.5.5L5.500 5.500M5.500.5L.5 5.500" stroke="#3c3c3c" stroke-width="1.300"/></svg>
  <div class="dtt" style="left:1724px;color:#c7c7c7">2</div>
  <svg class="abs" style="left:1737px;top:8px" width="13" height="12" viewBox="0 0 13 12"><path d="M6.500 .5L12.700 11.500H.3Z" fill="#f29c5a"/><path d="M6.500 4V8" stroke="#3c3c3c" stroke-width="1.300"/><circle cx="6.500" cy="9.700" r=".8" fill="#3c3c3c"/></svg>
  <div class="dtt" style="left:1752px;color:#c7c7c7">4</div>
  <svg class="abs" style="left:1765px;top:9px" width="12" height="11" viewBox="0 0 12 11"><path d="M.5 .5H11.500V8.500H3L.5 10.800Z" fill="#5b9bf0"/><path d="M2.500 3H9.500M2.500 5.500H9.500" stroke="#3c3c3c" stroke-width="1"/></svg>
  <div class="dtt" style="left:1778.500px;color:#c7c7c7">13</div>
  <div class="abs" style="left:1801.500px;top:6px;width:1px;height:16px;background:#5e5e5e"></div>
  <div class="abs" style="left:1809.500px;top:4px;width:20px;height:20px;border-radius:10px;background:#1b6ef3"></div>
  <svg class="abs" style="left:1813px;top:8px" width="14" height="13" viewBox="0 0 14 13"><path d="M6 1.500H1.500V9H4.500L6.500 11.500L8.500 9H11V6.500" fill="none" stroke="#fff" stroke-width="1.400"/><path d="M10.500 0L11.300 2.200L13.500 3L11.300 3.800L10.500 6L9.700 3.800L7.500 3L9.700 2.200Z" fill="#fff"/></svg>
  <svg class="abs" style="left:1838px;top:6px" width="16" height="16" viewBox="0 0 16 16"><path fill="#c7c7c7" fill-rule="evenodd" d="M6.700 1h2.600l.4 2 .9.400 1.700-1.100 1.800 1.800-1.100 1.700.4.900 2 .4v2.600l-2 .4-.4.900 1.100 1.700-1.800 1.800-1.700-1.100-.9.400-.4 2H6.700l-.4-2-.9-.4-1.700 1.100-1.800-1.800 1.100-1.700-.4-.9-2-.4V6.700l2-.4.400-.9-1.100-1.700 1.800-1.800 1.700 1.100.9-.4zM8 5.200A2.800 2.800 0 1 0 8 10.800 2.800 2.800 0 1 0 8 5.200zM8 3.800A4.200 4.200 0 1 1 8 12.200 4.200 4.200 0 1 1 8 3.800z"/></svg>
  <svg class="abs" style="left:1872px;top:7px" width="4" height="14" viewBox="0 0 4 14"><circle cx="2" cy="2" r="1.400" fill="#c7c7c7"/><circle cx="2" cy="7" r="1.400" fill="#c7c7c7"/><circle cx="2" cy="12" r="1.400" fill="#c7c7c7"/></svg>
  <svg class="abs" style="left:1896px;top:9px" width="10" height="10" viewBox="0 0 10 10"><path d="M.7.7L9.300 9.300M9.300.7L.7 9.300" stroke="#c7c7c7" stroke-width="1.400"/></svg>
  <!--ELEMENTS-->
<div class="abs" style="left:0;top:29px;width:1595px;height:280px;overflow:hidden">
<div class="abs" style="left:0;top:89px;width:1580px;height:17px;background:#3d3d3d"></div>
</div>
<div class="abs" style="left:3.500px;top:125px;width:11px;height:3px"><i class="d3" style="left:0"></i><i class="d3" style="left:3.500px"></i><i class="d3" style="left:7px"></i></div>
<svg class="tri" style="left:177px;top:36px" width="4.500" height="8" viewBox="0 0 5 9"><path d="M0 0L5 4.500L0 9Z" fill="#bdbdbd"/></svg><div class="ln" style="left:185px;top:32px"><span class="t">&lt;td</span> <span class="n">class</span><span class="t">="</span><span class="v">cr-dr-col align-middle</span><span class="t">"</span><span class="t">&gt;</span><span class="dots"><i></i><i></i><i></i></span><span class="t">&lt;/td&gt;</span></div>
<svg class="tri" style="left:175px;top:55.5px" width="8" height="4.500" viewBox="0 0 9 5"><path d="M0 0H9L4.500 5Z" fill="#bdbdbd"/></svg><div class="ln" style="left:185px;top:49px"><span class="t">&lt;td</span><span class="t">&gt;</span></div>
<svg class="tri" style="left:189px;top:71px" width="4.500" height="8" viewBox="0 0 5 9"><path d="M0 0L5 4.500L0 9Z" fill="#bdbdbd"/></svg><div class="ln" style="left:197px;top:67px"><span class="t">&lt;select</span> <span class="n">name</span><span class="t">="</span><span class="v">debit_account</span><span class="t">"</span> <span class="n">id</span><span class="t">="</span><span class="v">debit_account</span><span class="t">"</span> <span class="n">class</span><span class="t">="</span><span class="v">form-control tomselected ts-hidden-accessible</span><span class="t">"</span> <span class="n">required</span> <span class="n">tabindex</span><span class="t">="</span><span class="v">-1</span><span class="t">"</span><span class="t">&gt;</span><span class="dots"><i></i><i></i><i></i></span><span class="t">&lt;/select&gt;</span></div>
<svg class="tri" style="left:187px;top:90.5px" width="8" height="4.500" viewBox="0 0 9 5"><path d="M0 0H9L4.500 5Z" fill="#bdbdbd"/></svg><div class="ln" style="left:197px;top:84px"><span class="t">&lt;div</span> <span class="n">class</span><span class="t">="</span><span class="v">ts-wrapper form-control single plugin-clear_button required full has-items input-hidden</span><span class="t">"</span><span class="t">&gt;</span><span class="flex">flex</span></div>
<svg class="tri" style="left:199px;top:107.5px" width="8" height="4.500" viewBox="0 0 9 5"><path d="M0 0H9L4.500 5Z" fill="#bdbdbd"/></svg><div class="ln" style="left:209px;top:101px"><span class="t">&lt;div</span> <span class="n">class</span><span class="t">="</span><span class="v">ts-control</span><span class="t">"</span><span class="t">&gt;</span><span class="flex">flex</span></div>
<svg class="tri" style="left:211px;top:125.5px" width="8" height="4.500" viewBox="0 0 9 5"><path d="M0 0H9L4.500 5Z" fill="#bdbdbd"/></svg><div class="ln" style="left:221px;top:119px"><span class="t">&lt;div</span> <span class="n">data-value</span><span class="t">="</span><span class="v">App\Models\VendorData\Vendor_11</span><span class="t">"</span> <span class="n">class</span><span class="t">="</span><span class="v">item</span><span class="t">"</span> <span class="n">data-ts-item</span><span class="t">&gt;</span><span class="flex">flex</span><span class="eq"> == $0</span></div>
<div class="ln" style="left:230px;top:136px"><span class="w">" HONEYWELL AEROSPACE SINGAPORE PTE LTD - 5101 (Vendor) "</span></div>
<div class="ln" style="left:218px;top:153px"><span class="t">&lt;/div&gt;</span></div>
<div class="ln" style="left:218px;top:171px"><span class="t">&lt;input</span> <span class="n">type</span><span class="t">="</span><span class="v">text</span><span class="t">"</span> <span class="n">autocomplete</span><span class="t">="</span><span class="v">off</span><span class="t">"</span> <span class="n">size</span><span class="t">="</span><span class="v">1</span><span class="t">"</span> <span class="n">tabindex</span><span class="t">="</span><span class="v">0</span><span class="t">"</span> <span class="n">role</span><span class="t">="</span><span class="v">combobox</span><span class="t">"</span> <span class="n">aria-haspopup</span><span class="t">="</span><span class="v">listbox</span><span class="t">"</span> <span class="n">aria-expanded</span><span class="t">="</span><span class="v">false</span><span class="t">"</span> <span class="n">aria-controls</span><span class="t">="</span><span class="v">debit_account-ts-dropdown</span><span class="t">"</span> <span class="n">id</span><span class="t">="</span><span class="v">debit_account-ts-control</span><span class="t">"</span> <span class="n">placeholder</span><span class="t">=</span></div>
<div class="ln" style="left:218px;top:187px"><span class="t">"</span><span class="v">-- Select Debit Account --</span><span class="t">"</span> <span class="n">aria-activedescendant</span><span class="t">="</span><span class="v">debit_account-opt-2</span><span class="t">"</span><span class="t">&gt;</span></div>
<div class="ln" style="left:218px;top:204px"><span class="t">&lt;div</span> <span class="n">class</span><span class="t">="</span><span class="v">clear-button</span><span class="t">"</span> <span class="n">title</span><span class="t">="</span><span class="v">Clear</span><span class="t">"</span> <span class="n">role</span><span class="t">="</span><span class="v">button</span><span class="t">"</span> <span class="n">tabindex</span><span class="t">="</span><span class="v">0</span><span class="t">"</span><span class="t">&gt;</span><span class="w">×</span><span class="t">&lt;/div&gt;</span></div>
<div class="ln" style="left:206px;top:221px"><span class="t">&lt;/div&gt;</span></div>
<svg class="tri" style="left:201px;top:243px" width="4.500" height="8" viewBox="0 0 5 9"><path d="M0 0L5 4.500L0 9Z" fill="#bdbdbd"/></svg><div class="ln" style="left:209px;top:239px"><span class="t">&lt;div</span> <span class="n">class</span><span class="t">="</span><span class="v">ts-dropdown single plugin-clear_button</span><span class="t">"</span> <span class="n">style</span><span class="t">="</span><span class="v">display: none; visibility: visible;</span><span class="t">"</span><span class="t">&gt;</span><span class="dots"><i></i><i></i><i></i></span><span class="t">&lt;/div&gt;</span></div>
<div class="ln" style="left:194px;top:256px"><span class="t">&lt;/div&gt;</span></div>
<div class="ln" style="left:182px;top:273px"><span class="t">&lt;/td&gt;</span></div>
<svg class="tri" style="left:177px;top:295px" width="4.500" height="8" viewBox="0 0 5 9"><path d="M0 0L5 4.500L0 9Z" fill="#bdbdbd"/></svg><div class="ln" style="left:185px;top:291px"><span class="t">&lt;td</span><span class="t">&gt;</span><span class="dots"><i></i><i></i><i></i></span><span class="t">&lt;/td&gt;</span></div>
<!--/ELEMENTS-->
  <!--STYLES-->
<!-- elements scrollbar -->
<div class="abs" style="left:1580px;top:29px;width:15px;height:280px;background:#2b2b2b"></div>
<svg class="abs" style="left:1582px;top:33px" width="10" height="6" viewBox="0 0 10 6"><path d="M0 6L5 0L10 6Z" fill="#9e9e9e"/></svg>
<svg class="abs" style="left:1582px;top:296px" width="10" height="6" viewBox="0 0 10 6"><path d="M0 0L5 6L10 0Z" fill="#9e9e9e"/></svg>
<div class="abs" style="left:1583px;top:141px;width:9px;height:47px;border-radius:4.500px;background:#9e9e9e"></div>
<!-- accessibility button -->
<div class="abs" style="left:1549px;top:44px;width:26px;height:26px;border-radius:13px;background:#1f1f1f;box-shadow:0 0 3px rgba(0,0,0,.5)"></div>
<svg class="abs" style="left:1555px;top:50px" width="14" height="15" viewBox="0 0 14 15"><circle cx="7" cy="1.800" r="1.600" fill="#e3e3e3"/><path d="M1 4.200C4.500 5.200 9.500 5.200 13 4.200V5.800C11.500 6.300 10 6.500 9.300 6.600V14.500H7.900V10.500H6.100V14.500H4.700V6.600C4 6.500 2.500 6.300 1 5.800Z" fill="#e3e3e3"/></svg>
<!-- styles pane -->
<div class="abs" style="left:1595px;top:28px;width:1px;height:305px;background:#4a4a4a"></div>
<div class="abs" style="left:1596px;top:28px;width:324px;height:27px;background:#3c3c3c;border-bottom:1px solid #5c5c5c"></div>
<div class="dtt" style="left:1606px;top:34.500px;color:#a8c7fa">Styles</div>
<div class="abs" style="left:1596px;top:52px;width:52px;height:3px;border-radius:0 3px 0 0;background:#a8c7fa"></div>
<div class="dtt" style="left:1658px;top:34.500px">Computed</div>
<div class="dtt" style="left:1736px;top:34.500px">Layout</div>
<div class="dtt" style="left:1793.500px;top:34.500px;letter-spacing:-.22px">Event Listeners</div>
<svg class="abs" style="left:1889px;top:36px" width="12" height="10" viewBox="0 0 12 10"><path d="M1 .8L5 5L1 9.200M7 .8L11 5L7 9.200" fill="none" stroke="#c7c7c7" stroke-width="1.300"/></svg>
<div class="abs" style="left:1596px;top:55px;width:309px;height:27px;border-bottom:1px solid #4a4a4a"></div>
<div class="abs" style="left:1601px;top:58.500px;width:156.500px;height:20px;border-radius:10px;background:#3d3d3d"></div>
<svg class="abs" style="left:1612px;top:63.500px" width="10" height="10" viewBox="0 0 10 10"><path d="M.8 .8H9.200L5.700 5V9.200H4.300V5Z" fill="none" stroke="#c7c7c7" stroke-width="1.200" stroke-linejoin="round"/></svg>
<div class="dtt" style="left:1629px;top:60.500px;color:#c7c7c7;font-size:12px">Filter</div>
<div class="dtt" style="left:1764px;top:60px;font-size:11.500px">:hov</div>
<div class="dtt" style="left:1793.500px;top:60px;font-size:11.500px">.cls</div>
<svg class="abs" style="left:1825px;top:62px" width="16" height="14" viewBox="0 0 16 14"><path d="M6.500 .5V12.500M.5 6.500H12.500" stroke="#e3e3e3" stroke-width="1.500"/><path d="M16 9.500V14H11.500Z" fill="#c7c7c7"/></svg>
<svg class="abs" style="left:1853px;top:60.500px" width="12" height="16" viewBox="0 0 12 16"><path d="M1.500 0H10.500A1.500 1.500 0 0 1 12 1.500V8.500H8V14A2 2 0 0 1 4 14V8.500H0V1.500A1.500 1.500 0 0 1 1.500 0Z" fill="#e3e3e3"/><path d="M6.700 0V3M9.300 0V3.800" stroke="#282828" stroke-width="1"/><path d="M0 5.800H12" stroke="#282828" stroke-width="1"/></svg>
<svg class="abs" style="left:1879px;top:61.500px" width="14" height="14" viewBox="0 0 14 14"><rect x=".8" y=".8" width="12.400" height="12.400" rx="1.500" fill="none" stroke="#e3e3e3" stroke-width="1.500"/><path d="M9 1V13" stroke="#e3e3e3" stroke-width="1.500"/><path d="M6.500 4.500V9.500L3.500 7Z" fill="#e3e3e3"/></svg>
<!-- styles scrollbar -->
<div class="abs" style="left:1905px;top:55px;width:15px;height:278px;background:#2b2b2b"></div>
<svg class="abs" style="left:1907.500px;top:61px" width="10" height="6" viewBox="0 0 10 6"><path d="M0 6L5 0L10 6Z" fill="#9e9e9e"/></svg>
<svg class="abs" style="left:1907.500px;top:319px" width="10" height="6" viewBox="0 0 10 6"><path d="M0 0L5 6L10 0Z" fill="#9e9e9e"/></svg>
<div class="abs" style="left:1908px;top:73px;width:9px;height:17px;border-radius:4.500px;background:#9e9e9e"></div>
<!-- rules -->
<div class="sl" style="top:83.500px"><span class="g">element.style</span> {</div>
<div class="sl" style="top:99.500px">}</div>
<div class="sep" style="top:118px"></div>
<div class="sl" style="top:121.500px">.ts-control .item {</div>
<div class="sr" style="top:122.500px"><span class="lk">&lt;style&gt;</span></div>
<div class="sl" style="top:136.500px;left:1618px"><span class="p">display</span>: flex;<svg style="display:inline-block;vertical-align:-2px;margin-left:1px" width="14" height="12" viewBox="0 0 14 12"><g fill="#c7c7c7"><rect x="0" y="0" width="3" height="5"/><rect x="5" y="0" width="3" height="5"/><rect x="10" y="0" width="3" height="5"/><rect x="0" y="7" width="3" height="5"/><rect x="5" y="7" width="3" height="5"/><rect x="10" y="7" width="3" height="5"/></g><g fill="#282828"><rect x="1" y="1" width="1" height="2.500"/><rect x="6" y="1" width="1" height="2.500"/><rect x="11" y="1" width="1" height="2.500"/><rect x="6" y="8" width="1" height="2.500"/></g></svg></div>
<div class="sl" style="top:151px;left:1618px"><span class="p">align-items</span>: center;</div>
<div class="sl" style="top:165.500px">}</div>
<div class="sep" style="top:183px"></div>
<div class="sl" style="top:186.500px">.ts-control &gt; * {</div>
<div class="sr" style="top:187.500px"><span class="lk">&lt;style&gt;</span></div>
<div class="sl" style="top:201.500px;left:1618px"><span class="p">vertical-align</span>: baseline;</div>
<div class="sl" style="top:216px;left:1618px;text-decoration:line-through;text-decoration-color:#e3e3e3"><span class="p">display</span>: inline-block;</div>
<div class="sl" style="top:230.500px">}</div>
<div class="sep" style="top:248px"></div>
<div class="sl" style="top:251.500px">* {</div>
<div class="sr" style="top:252.500px"><span class="ul">admin.css:14374</span></div>
<div class="sl" style="top:266.500px;left:1618px"><span class="p">box-sizing</span>: border-box;</div>
<div class="sl" style="top:281px">}</div>
<div class="sep" style="top:299px"></div>
<div class="sl" style="top:302px">*<span class="g">, ::after, ::before</span> {</div>
<div class="sr" style="top:303px"><span class="ul">admin.css:9</span></div>
<div class="sl" style="top:317.500px;left:1618px;text-decoration:line-through;text-decoration-color:#e3e3e3"><span class="p">box-sizing</span>: border-box;</div>
<!-- watermark -->
<div class="abs" style="left:1600.500px;top:238px;font-size:20.500px;line-height:26px;color:rgba(200,200,200,.55);white-space:nowrap;letter-spacing:-.35px">Activate Windows</div>
<div class="abs" style="left:1599px;top:264px;font-size:15.200px;line-height:20px;color:rgba(200,200,200,.5);white-space:nowrap;letter-spacing:-.1px">Go to Settings to activate Windows.</div>
<!--/STYLES-->
  <!--CRUMBS-->
<div class="abs" style="left:0;top:309px;width:1595px;height:24px;background:#282828;border-top:1px solid #4a4a4a"></div>
<div class="abs" style="left:0;top:310px;width:24px;height:23px;border:1px solid #757575;background:#282828"></div>
<svg class="abs" style="left:9.500px;top:318px" width="5" height="7" viewBox="0 0 5 7"><path d="M5 0L0 3.500L5 7Z" fill="#d0d0d0"/></svg>
<div class="abs" style="left:1571px;top:310px;width:24px;height:23px;border:1px solid #4a4a4a;background:#282828"></div>
<svg class="abs" style="left:1581px;top:318px" width="4" height="7" viewBox="0 0 4 7"><path d="M0 0L4 3.500L0 7Z" fill="#8a8a8a"/></svg>
<div class="abs" style="left:24px;top:310px;width:118px;height:23px;overflow:hidden"><div class="cr" style="left:auto;right:10px;top:4px">div.container.container-fluid</div></div>
<div class="cr" style="left:146px"><b>div</b>.card.ledger-card</div>
<div class="cr" style="left:265.500px"><b>div</b>.card-body.p-0</div>
<div class="cr" style="left:373.500px"><b>form</b>#voucherForm</div>
<div class="cr" style="left:489.500px"><b>div</b>.p-4.pt-0</div>
<div class="cr" style="left:565px"><b>div</b>.table-responsive.mb-4</div>
<div class="cr" style="left:716px"><b>table</b>.table.ledger-table</div>
<div class="cr" style="left:853px"><b>tbody</b></div>
<div class="cr" style="left:898.500px"><b>tr</b></div>
<div class="cr" style="left:921px"><b>td</b></div>
<div class="cr" style="left:945px"><b>div</b>.ts-wrapper.form-control.single.plugin-clear_button.required.full.has-items.input-hidden</div>
<div class="cr" style="left:1438.500px"><b>div</b>.ts-control</div>
<div class="abs" style="left:1515px;top:310px;width:56px;height:23px;background:#004a77"></div>
<div class="cr" style="left:1522.500px"><b>div</b>.item</div>
<!--/CRUMBS-->
</div>
<!--TASKBAR-->
<div id="tb">
  <!-- start -->
  <svg class="abs" style="left:16px;top:12px" width="16" height="16" viewBox="0 0 16 16"><path d="M0 2.300L6.600 1.400V7.600H0ZM7.400 1.300L16 0V7.600H7.400ZM0 8.400H6.600V14.600L0 13.700ZM7.400 8.400H16V16L7.400 14.700Z" fill="#fff"/></svg>
  <!-- search box -->
  <div class="abs" style="left:48px;top:0;width:288px;height:40px;background:#f2f2f2;border:1px solid #d0d0d0;border-bottom:none"></div>
  <svg class="abs" style="left:59px;top:11px" width="19" height="19" viewBox="0 0 19 19"><circle cx="12" cy="7.300" r="5.300" fill="none" stroke="#1f1f1f" stroke-width="1.300"/><path d="M8.200 11.300L1 18.300" stroke="#1f1f1f" stroke-width="1.400"/></svg>
  <div class="abs" id="tbs" style="left:88.500px;top:9px;font-size:15px;line-height:22px;color:#2e2e2e;white-space:nowrap;letter-spacing:-.27px">Type here to search</div>
  <svg class="abs" style="left:262px;top:5px" width="68" height="32" viewBox="0 0 68 32"><defs><linearGradient id="sg" x1="0" y1="0" x2="0" y2="1"><stop offset="0" stop-color="#ffd84a"/><stop offset="1" stop-color="#f6a81c"/></linearGradient></defs><path d="M26 2.500C28.300 9 31 12.200 38 14.500C31 16.800 28.300 20 26 26.500C23.700 20 21 16.800 14 14.500C21 12.200 23.700 9 26 2.500Z" fill="url(#sg)" stroke="url(#sg)" stroke-width="1.200" stroke-linejoin="round"/><path d="M49 12.500C50 15.800 51.200 17 54.500 18C51.200 19 50 20.200 49 23.500C48 20.200 46.800 19 43.500 18C46.800 17 48 15.800 49 12.500Z" fill="url(#sg)" stroke="url(#sg)" stroke-width=".8" stroke-linejoin="round"/><path d="M7 19C7.500 21.700 8.300 22.500 11 23C8.300 23.500 7.500 24.300 7 27C6.500 24.300 5.700 23.500 3 23C5.700 22.500 6.500 21.700 7 19Z" fill="#2aa3ea" transform="rotate(15 7 23)"/><circle cx="42.700" cy="4.700" r="1.900" fill="#ef6a2a"/><circle cx="61" cy="24.700" r="1.900" fill="#8ac53e"/></svg>
  <!-- task view -->
  <svg class="abs" style="left:351px;top:11px" width="19" height="17" viewBox="0 0 19 17"><g fill="none" stroke="#fff" stroke-width="1.300"><rect x="2.500" y="4" width="10" height="8.500"/><path d="M.7 3.500V1H14.300V3.500M.7 13V15.500H14.300V13"/></g><path d="M17.500 1V5.500M17.500 7V9.500M17.500 11V15.500" stroke="#fff" stroke-width="1.500"/></svg>
  <!-- explorer -->
  <svg class="abs" style="left:399px;top:10px" width="24" height="20" viewBox="0 0 24 20"><path d="M1 2.500C1 1.700 1.700 1 2.500 1H8.500L10.500 3H21.500C22.300 3 23 3.700 23 4.500V17H1Z" fill="#e8a820"/><path d="M1 5.500H23V16.500C23 17.300 22.300 18 21.500 18H2.500C1.700 18 1 17.300 1 16.500Z" fill="#ffd65c"/><path d="M5.500 19V12.500C5.500 11.700 6.200 11 7 11H17C17.800 11 18.500 11.700 18.500 12.500V19H15V14.500H9V19Z" fill="#2b8de0"/></svg>
  <!-- teams -->
  <svg class="abs" style="left:447px;top:7px" width="25" height="25" viewBox="0 0 25 25"><circle cx="19.500" cy="7" r="3.200" fill="#7b83eb"/><path d="M15 11.500H24C24.500 11.500 25 12 25 12.500V18C25 20.500 23 22.500 20.500 22.500S16 20.500 16 18Z" fill="#7b83eb"/><circle cx="10.500" cy="5" r="4.300" fill="#8a90f0"/><path d="M5 11.500H17.500C18 11.500 18.500 12 18.500 12.500V19C18.500 22 15.500 24.500 12 24.500S5.500 22 5.500 19Z" fill="#6a70dc"/><rect x="0" y="9.500" width="12.500" height="12.500" rx="1.500" fill="#4b53bc"/><path d="M3.500 12.800H9V14.300H7V19H5.500V14.300H3.500Z" fill="#fff"/></svg>
  <!-- A app -->
  <div class="abs" style="left:497px;top:8px;width:24px;height:24px;background:#1b1d25"></div>
  <svg class="abs" style="left:499px;top:11px" width="20" height="18" viewBox="0 0 20 18"><defs><linearGradient id="ag" x1="0" y1="0" x2="0" y2="1"><stop offset="0" stop-color="#ff5a3c"/><stop offset=".3" stop-color="#5cd66a"/><stop offset=".55" stop-color="#2e9bf5"/><stop offset="1" stop-color="#2a6af0"/></linearGradient></defs><path d="M1 17C5 13 7.500 7 10 1C12.500 7 15 13 19 17C15 15.500 12.500 12 10 7.500C7.500 12 5 15.500 1 17Z" fill="url(#ag)"/></svg>
  <!-- chrome active -->
  <div class="abs" style="left:534px;top:0;width:45px;height:40px;background:#4f4f4f"></div>
  <div class="abs" style="left:579px;top:0;width:3px;height:40px;background:#3b3b3b"></div>
  <svg class="abs" style="left:545px;top:7px" width="28" height="28" viewBox="0 0 28 28"><circle cx="12.500" cy="12.500" r="12" fill="#dd4b3e"/><path d="M12.500 12.500L2.100 6.500A12 12 0 0 0 6.500 22.900Z" fill="#1ea362"/><path d="M12.500 12.500L6.500 22.900A12 12 0 0 0 24.500 12.500Z" fill="#1ea362"/><path d="M12.500 12.500L18.500 22.900A12 12 0 0 0 22.900 6.500Z" fill="#ffcd40"/><path d="M12.500 12.500L2.100 6.500A12 12 0 0 1 22.900 6.500Z" fill="#dd4b3e"/><circle cx="12.500" cy="12.500" r="5.600" fill="#fff"/><circle cx="12.500" cy="12.500" r="4.500" fill="#4688f4"/><circle cx="19" cy="19.500" r="8" fill="#0b5c4a"/><text x="19" y="23" font-family="Liberation Sans,sans-serif" font-weight="bold" font-size="9.500" fill="#fff" text-anchor="middle">R</text></svg>
  <div class="abs" style="left:391px;top:38px;width:40px;height:2px;background:#76b9ed"></div>
  <div class="abs" style="left:440px;top:38px;width:40px;height:2px;background:#76b9ed"></div>
  <div class="abs" style="left:489px;top:38px;width:40px;height:2px;background:#76b9ed"></div>
  <div class="abs" style="left:534px;top:38px;width:48px;height:2px;background:#76b9ed"></div>
  <!-- weather -->
  <svg class="abs" style="left:1497px;top:9px" width="22" height="22" viewBox="0 0 22 22"><defs><radialGradient id="sun" cx=".4" cy=".3" r=".8"><stop offset="0" stop-color="#ffc61a"/><stop offset=".6" stop-color="#fa9a10"/><stop offset="1" stop-color="#e8600c"/></radialGradient></defs><circle cx="11" cy="11" r="10.200" fill="url(#sun)"/></svg>
  <div class="abs tbt" style="left:1528px;top:9px;font-size:13.600px;line-height:22px;letter-spacing:-.4px">35°C</div>
  <div class="abs tbt" style="left:1566.400px;top:9px;font-size:13.600px;line-height:22px;letter-spacing:-.26px">Sunny</div>
  <svg class="abs" style="left:1628px;top:16px" width="14" height="9" viewBox="0 0 14 9"><path d="M1 8L7 1.500L13 8" fill="none" stroke="#fff" stroke-width="1.400"/></svg>
  <!-- tray -->
  <div class="abs" style="left:1650.500px;top:12px;width:16.500px;height:16px;border-radius:2px;background:#f4f7fc"></div>
  <svg class="abs" style="left:1652px;top:15px" width="14" height="10" viewBox="0 0 14 10"><path d="M3.500 9A2.800 2.800 0 0 1 3.300 3.500A4 4 0 0 1 11 4.300A2.400 2.400 0 0 1 10.800 9Z" fill="none" stroke="#2a6af0" stroke-width="1.300"/><path d="M5 6.500L7 8L9 6.500" fill="none" stroke="#2a6af0" stroke-width="1"/></svg>
  <svg class="abs" style="left:1677px;top:11px" width="13" height="18" viewBox="0 0 13 18"><path d="M2 3.500V1.500H9V3.500M2 14.500V16.500H9V14.500" fill="none" stroke="#fff" stroke-width="1.100"/><rect x=".8" y="5.500" width="8" height="7" rx="1.500" fill="none" stroke="#fff" stroke-width="1.200"/><path d="M9 8L12.200 6.300V11.700L9 10Z" fill="none" stroke="#fff" stroke-width="1.100"/></svg>
  <svg class="abs" style="left:1698px;top:12px" width="18" height="17" viewBox="0 0 18 17"><path d="M3.800 11.500A3 3 0 0 1 3.600 5.600A4.500 4.500 0 0 1 12 5.200A3.200 3.200 0 0 1 12.500 11.500Z" fill="#d8d8d8"/><circle cx="12.500" cy="11.500" r="4.300" fill="#1478d4"/><path d="M12.500 10.700V14" stroke="#fff" stroke-width="1.300"/><circle cx="12.500" cy="9" r=".8" fill="#fff"/></svg>
  <svg class="abs" style="left:1722.500px;top:12px" width="17" height="17" viewBox="0 0 17 17"><path d="M3.500 1H15.500V10.500H3.500ZM9.500 10.500V14M6 14.500H13" fill="none" stroke="#fff" stroke-width="1.200"/><path d="M.8 2.500H4.800V5H.8ZM2.800 5V15H6" fill="none" stroke="#fff" stroke-width="1.100"/></svg>
  <svg class="abs" style="left:1747px;top:12.500px" width="15" height="15" viewBox="0 0 15 15"><path d="M.8 5.200H3.300L7 1.800V13.200L3.300 9.800H.8Z" fill="none" stroke="#fff" stroke-width="1.100" stroke-linejoin="round"/><path d="M9.700 5.300L14 9.700M14 5.300L9.700 9.700" stroke="#fff" stroke-width="1.200"/></svg>
  <div class="abs tbt" style="left:1765px;top:3px;width:40px;text-align:center;font-size:11.500px;line-height:17px;letter-spacing:-.5px">ENG</div>
  <div class="abs tbt" style="left:1765px;top:20px;width:40px;text-align:center;font-size:11.500px;line-height:17px">IN</div>
  <div class="abs tbt" style="left:1805px;top:2.500px;width:60px;text-align:center;font-size:11.500px;line-height:17px;letter-spacing:-.15px">5:15 PM</div>
  <div class="abs tbt" style="left:1805px;top:20px;width:60px;text-align:center;font-size:11.500px;line-height:17px;letter-spacing:0">3/6/2026</div>
  <svg class="abs" style="left:1878.500px;top:12px" width="17" height="15" viewBox="0 0 17 15"><path d="M.5 .5H16.500V11H7L3.500 14V11H.5Z" fill="#fff"/><path d="M3 3.300H14M3 5.600H14M3 7.900H14" stroke="#1f1f1f" stroke-width=".9"/></svg>
  <div class="abs" style="left:1884.500px;top:17px;width:20px;height:20px;border-radius:10px;background:#262626;border:1px solid #9a9a9a;color:#fff;font-size:11.500px;line-height:18px;text-align:center;letter-spacing:-.3px">22</div>
  <div class="abs" style="left:1915px;top:4px;width:1px;height:34px;background:#5a5a5a"></div>
</div>
</body>
</html>
